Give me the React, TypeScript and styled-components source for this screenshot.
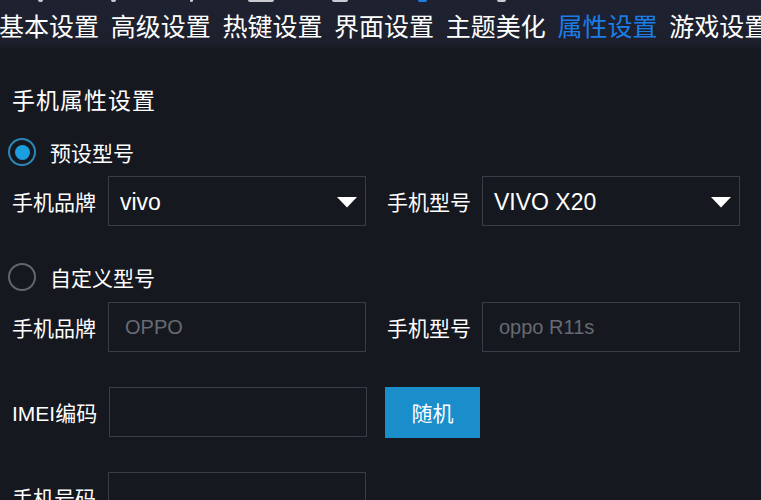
import React from "react";
import styled, { createGlobalStyle } from "styled-components";

const GlobalStyle = createGlobalStyle`
  html, body {
    margin: 0;
    padding: 0;
    background: #161820;
  }
  * {
    box-sizing: border-box;
  }
`;

const FONT = `"Liberation Sans", "Noto Sans CJK SC", sans-serif`;

const Page = styled.div`
  width: 761px;
  height: 500px;
  overflow: hidden;
  background: #161820;
  font-family: ${FONT};
  color: #ffffff;
`;

const TabBar = styled.div`
  height: 48px;
  display: flex;
  gap: 11.7px;
  margin-left: -1px;
  background: linear-gradient(#1e2130 0%, #1d202c 88%, #181b23 100%);
  white-space: nowrap;
`;

const Tab = styled.div<{ $active?: boolean }>`
  display: flex;
  flex-direction: column;
  flex: none;
  font-size: 25px;
  line-height: 30px;
  color: ${(p) => (p.$active ? "#1b7ee6" : "#ffffff")};
`;

// bottom edges of the tab icons that are cut off by the top of the picture
const IconEdge = styled.div<{ $offset: number; $w: number; $active?: boolean }>`
  height: 2px;
  width: ${(p) => p.$w}px;
  margin-left: ${(p) => p.$offset}px;
  margin-bottom: 10px;
  border-radius: 0 0 2px 2px;
  background: ${(p) => (p.$active ? "#1b7ee6" : "#c9cbd0")};
`;

const Content = styled.div`
  padding: 38px 0 0 12px;
  display: flex;
  flex-direction: column;
`;

const Heading = styled.div`
  font-size: 23px;
  line-height: 30px;
  letter-spacing: 1px;
  margin-bottom: 22px;
`;

const RadioRow = styled.div<{ $top?: number }>`
  display: flex;
  align-items: center;
  gap: 14px;
  height: 28px;
  margin-left: -4px;
  margin-top: ${(p) => p.$top ?? 0}px;
  font-size: 21px;
`;

const RadioCircle = styled.div<{ $checked?: boolean }>`
  width: 28px;
  height: 28px;
  border-radius: 50%;
  border: 2px solid ${(p) => (p.$checked ? "#2b87b6" : "#62656d")};
  display: flex;
  align-items: center;
  justify-content: center;

  &::after {
    content: "";
    width: 15px;
    height: 15px;
    border-radius: 50%;
    background: #1b9ee0;
    display: ${(p) => (p.$checked ? "block" : "none")};
  }
`;

const FieldRow = styled.div<{ $top: number }>`
  display: flex;
  align-items: center;
  height: 50px;
  margin-top: ${(p) => p.$top}px;
`;

const Label = styled.div<{ $w: number }>`
  width: ${(p) => p.$w}px;
  flex: none;
  font-size: 21px;
  white-space: nowrap;
`;

const Box = styled.div<{ $w?: number }>`
  width: ${(p) => p.$w ?? 258}px;
  height: 50px;
  flex: none;
  border: 1.5px solid #3a3d47;
  background: #161820;
  display: flex;
  align-items: center;
  justify-content: space-between;
  padding: 2px 8px 0 11px;
  font-size: 23px;
`;

const Input = styled.input`
  width: 258px;
  height: 50px;
  flex: none;
  border: 1.5px solid #3a3d47;
  background: #161820;
  padding: 0 0 0 16px;
  font-family: ${FONT};
  font-size: 20px;
  color: #ffffff;
  outline: none;

  &::placeholder {
    color: #676a72;
  }
`;

const Gap = styled.div<{ $w: number }>`
  width: ${(p) => p.$w}px;
  flex: none;
`;

const Button = styled.button`
  width: 95px;
  height: 51px;
  flex: none;
  border: none;
  background: #1a8dcb;
  color: #ffffff;
  font-family: ${FONT};
  font-size: 21px;
`;

const Arrow = () => (
  <svg width="20" height="11" viewBox="0 0 20 11">
    <polygon points="0,0 20,0 10,10.5" fill="#ffffff" />
  </svg>
);

const tabs = [
  { name: "基本设置", offset: 39, w: 5 },
  { name: "高级设置", offset: 0, w: 5 },
  { name: "热键设置", offset: -32, w: 3 },
  { name: "界面设置", offset: -86, w: 26 },
  { name: "主题美化", offset: -114, w: 16 },
  { name: "属性设置", offset: -140, w: 9, active: true },
  { name: "游戏设置", offset: -172, w: 9 },
];

const App = () => {
  return (
    <Page>
      <GlobalStyle />
      <TabBar>
        {tabs.map((t) => (
          <Tab key={t.name} $active={t.active}>
            <IconEdge $offset={t.offset} $w={t.w} $active={t.active} />
            {t.name}
          </Tab>
        ))}
      </TabBar>

      <Content>
        <Heading>手机属性设置</Heading>

        <RadioRow>
          <RadioCircle $checked />
          预设型号
        </RadioRow>
        <FieldRow $top={10}>
          <Label $w={96}>手机品牌</Label>
          <Box>
            vivo
            <Arrow />
          </Box>
          <Gap $w={21} />
          <Label $w={95}>手机型号</Label>
          <Box>
            VIVO X20
            <Arrow />
          </Box>
        </FieldRow>

        <RadioRow $top={37}>
          <RadioCircle />
          自定义型号
        </RadioRow>
        <FieldRow $top={11}>
          <Label $w={96}>手机品牌</Label>
          <Input placeholder="OPPO" />
          <Gap $w={21} />
          <Label $w={95}>手机型号</Label>
          <Input placeholder="oppo R11s" />
        </FieldRow>

        <FieldRow $top={35}>
          <Label $w={97}>IMEI编码</Label>
          <Input />
          <Gap $w={18} />
          <Button>随机</Button>
        </FieldRow>

        <FieldRow $top={35}>
          <Label $w={96}>手机号码</Label>
          <Input />
        </FieldRow>
      </Content>
    </Page>
  );
};

export default App;
